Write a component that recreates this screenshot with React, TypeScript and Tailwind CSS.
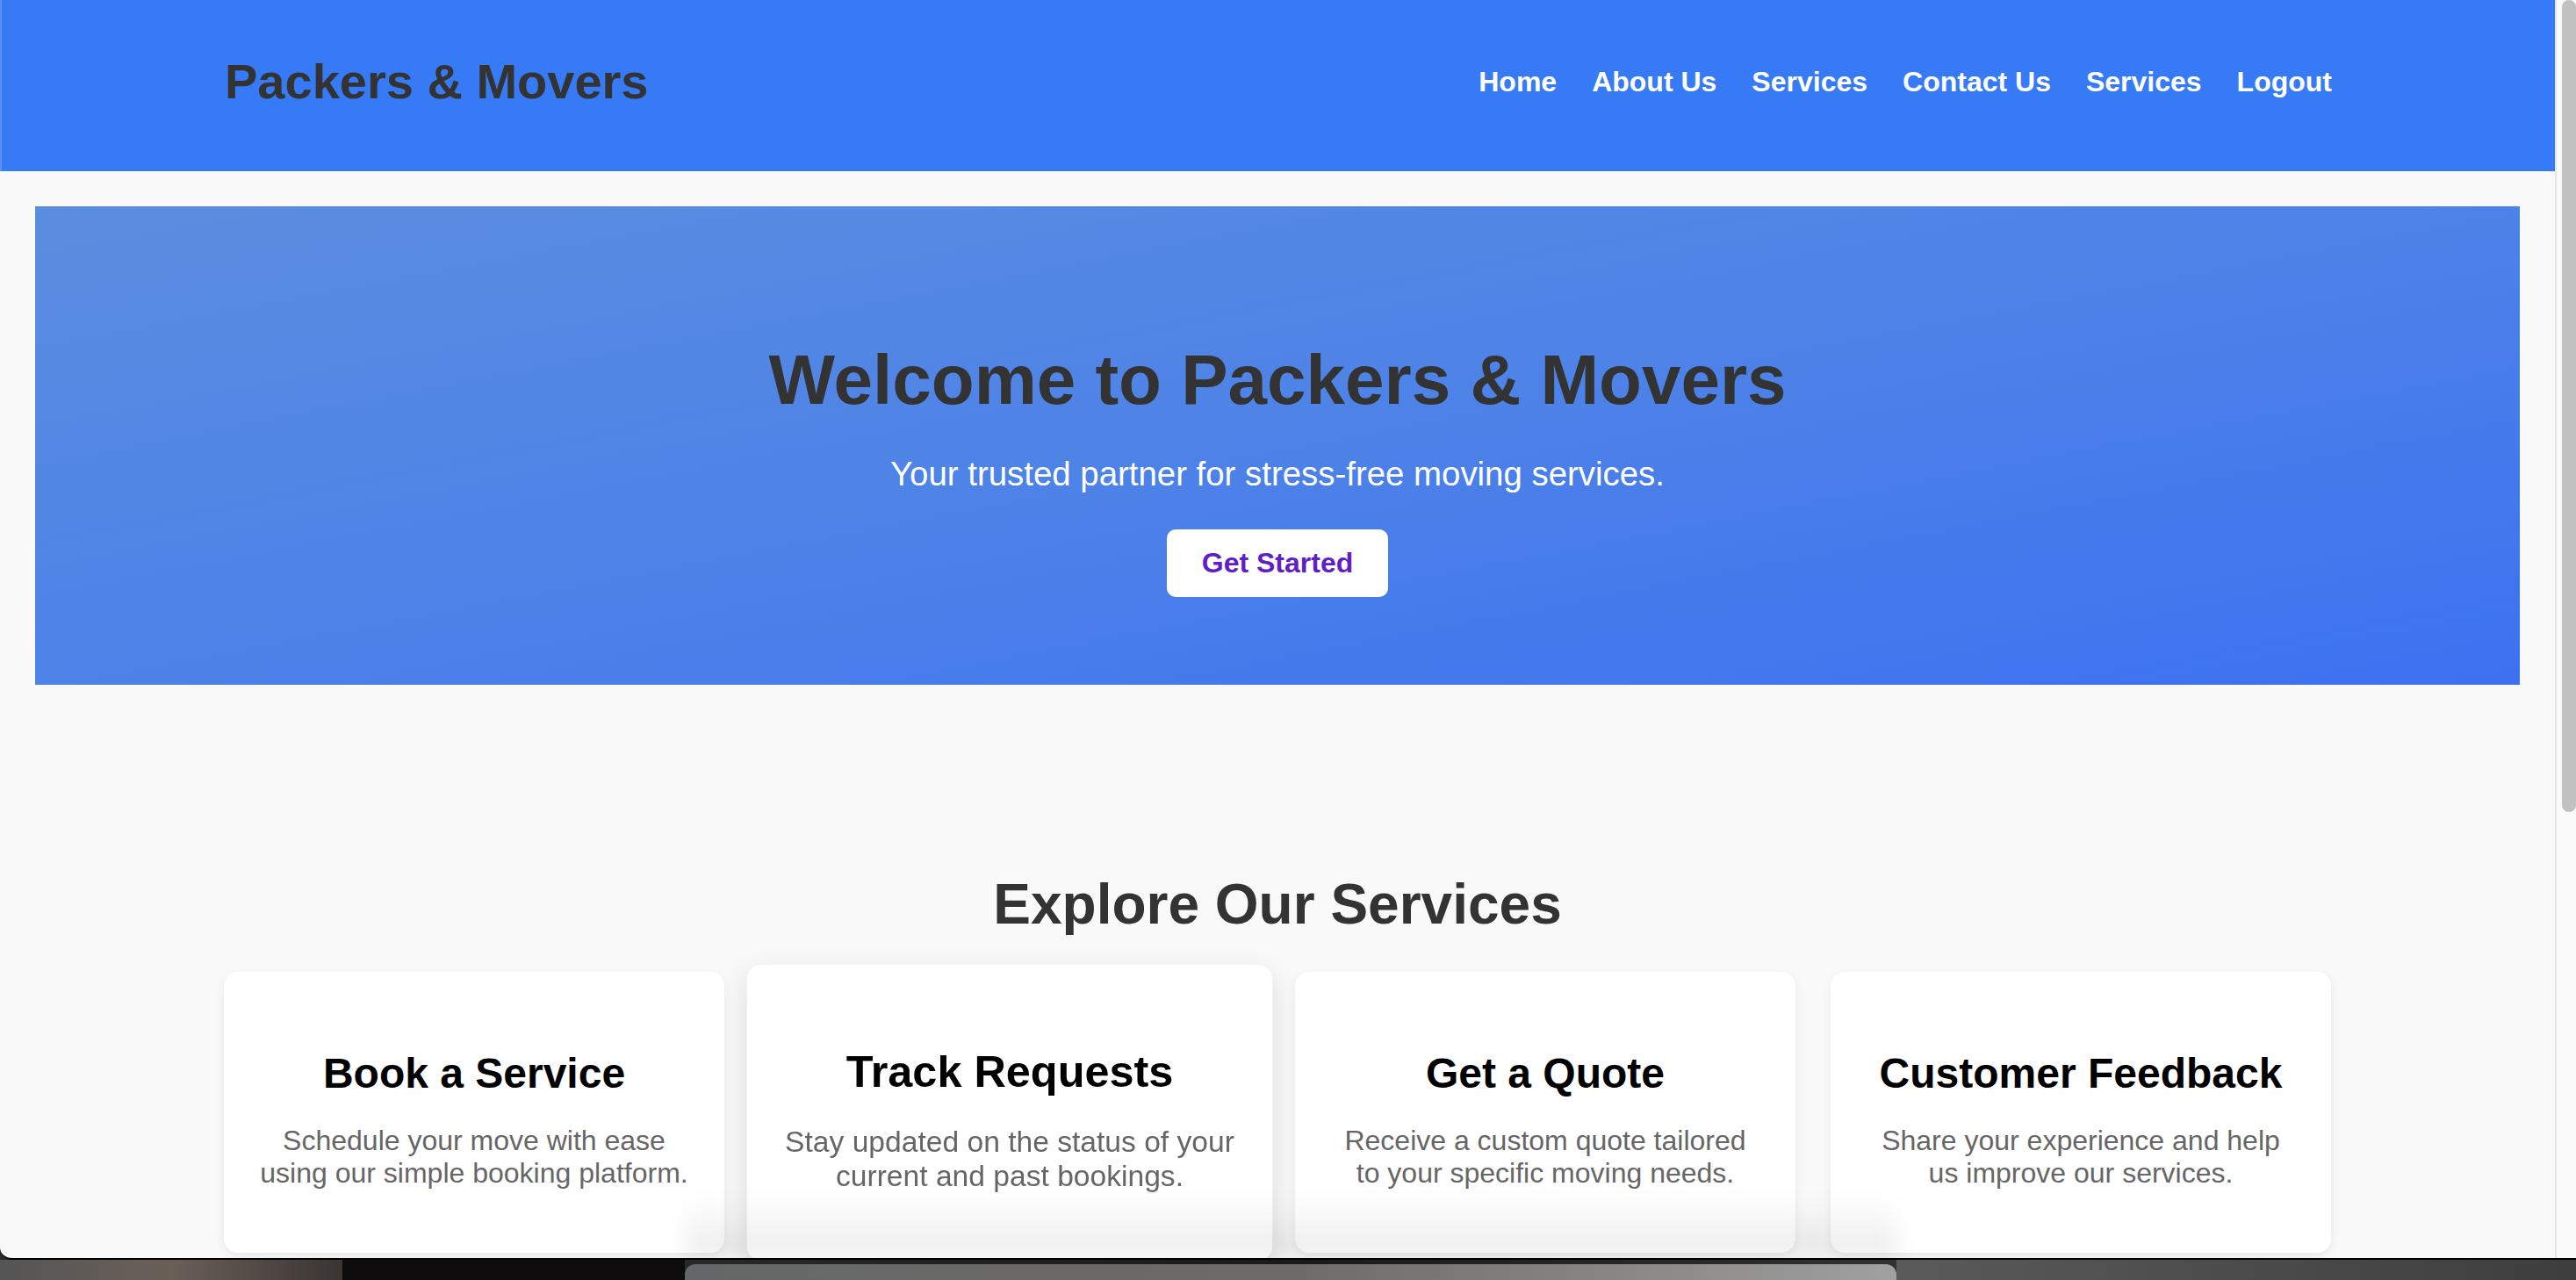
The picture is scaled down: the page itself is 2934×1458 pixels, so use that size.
const navLinks = ['Home', 'About Us', 'Services', 'Contact Us', 'Services', 'Logout'];

const services = [
  {
    title: 'Book a Service',
    text: 'Schedule your move with ease using our simple booking platform.',
  },
  {
    title: 'Track Requests',
    text: 'Stay updated on the status of your current and past bookings.',
    active: true,
  },
  {
    title: 'Get a Quote',
    text: 'Receive a custom quote tailored to your specific moving needs.',
  },
  {
    title: 'Customer Feedback',
    text: 'Share your experience and help us improve our services.',
  },
];

const Navbar = () => (
  <nav className="h-[195px] pb-[10px] bg-[#377af5] border-l-2 border-[#5b8ff0]">
    <div className="w-[2400px] h-full mx-auto flex items-center justify-between">
      <h1 className="text-[56px] font-bold text-[#333] leading-none">Packers &amp; Movers</h1>
      <ul className="flex items-center gap-[40px]">
        {navLinks.map((link, i) => (
          <li key={i}>
            <a href="#" className="text-[32px] font-bold text-white">
              {link}
            </a>
          </li>
        ))}
      </ul>
    </div>
  </nav>
);

const Hero = () => (
  <section className="mx-[40px] mt-[40px] h-[545px] bg-gradient-to-br from-[#5b8ddf] via-[#4d82e8] to-[#3d71f1] text-center pt-[152px]">
    <h2 className="text-[80px] font-bold text-[#333] leading-[1.15]">Welcome to Packers &amp; Movers</h2>
    <p className="mt-[39px] text-[38.4px] text-white leading-[1.15]">
      Your trusted partner for stress-free moving services.
    </p>
    <button className="mt-[41px] bg-white rounded-[10px] px-[40px] py-[20px] text-[32px] font-bold text-[#601ec4] leading-[1.15]">
      Get Started
    </button>
  </section>
);

const Services = () => (
  <section className="pt-[214px]">
    <h2 className="text-center text-[64px] font-bold text-[#333] leading-[1.15]">Explore Our Services</h2>
    <div className="w-[2400px] mx-auto mt-[39px] grid grid-cols-4 gap-[40px]">
      {services.map((s) => (
        <div
          key={s.title}
          className={`bg-white rounded-[16px] text-center px-[40px] pt-[88px] pb-[73px] ${
            s.active
              ? 'scale-105 relative z-10 shadow-[0_10px_30px_rgba(0,0,0,0.12)]'
              : 'shadow-[0_4px_12px_rgba(0,0,0,0.07)]'
          }`}
        >
          <h3 className="text-[48px] font-bold text-black leading-[1.15]">{s.title}</h3>
          <p className="mt-[31px] text-[32px] text-[#666] leading-[1.15]">{s.text}</p>
        </div>
      ))}
    </div>
  </section>
);

// fake browser scrollbar on the right edge
const Scrollbar = () => (
  <div className="w-[24px] h-full bg-[#fafafa] border-l-2 border-[#e6e6e6] flex justify-end">
    <div className="w-[16px] h-[925px] bg-[#c1c1c1] rounded-b-[8px] rounded-t-[8px]" />
  </div>
);

export default function App() {
  return (
    <div
      className="w-full h-[1458px] overflow-hidden flex flex-col bg-[#2b2b2b]"
      style={{ fontFamily: '"Liberation Sans", Arial, sans-serif' }}
    >
      <div className="h-[1435px] flex relative rounded-bl-[14px] overflow-hidden border-b-2 border-black">
        <div className="flex-1 bg-[#f9f9f9] overflow-hidden">
          <Navbar />
          <Hero />
          <Services />
        </div>
        <Scrollbar />
        {/* shadow cast by the window below */}
        <div className="absolute left-[780px] bottom-0 w-[1380px] h-[70px] bg-gradient-to-b from-transparent to-[rgba(0,0,0,0.08)] blur-[12px] z-20 pointer-events-none" />
      </div>
      <div className="flex-1 flex bg-gradient-to-r from-[#3a3a3a] via-[#1a1a1a] to-[#4d4d4d]">
        <div className="w-[390px] bg-gradient-to-r from-[#555] via-[#6b6058] to-[#3a3533]" />
        <div className="w-[390px] bg-[#0d0b0b]" />
        <div className="w-[1380px] mt-[5px] rounded-t-[12px] bg-gradient-to-r from-[#646767] via-[#6e6a68] to-[#a0a0a0]" />
        <div className="flex-1 bg-gradient-to-r from-[#5a5a5a] to-[#3e3e3e]" />
      </div>
    </div>
  );
}
